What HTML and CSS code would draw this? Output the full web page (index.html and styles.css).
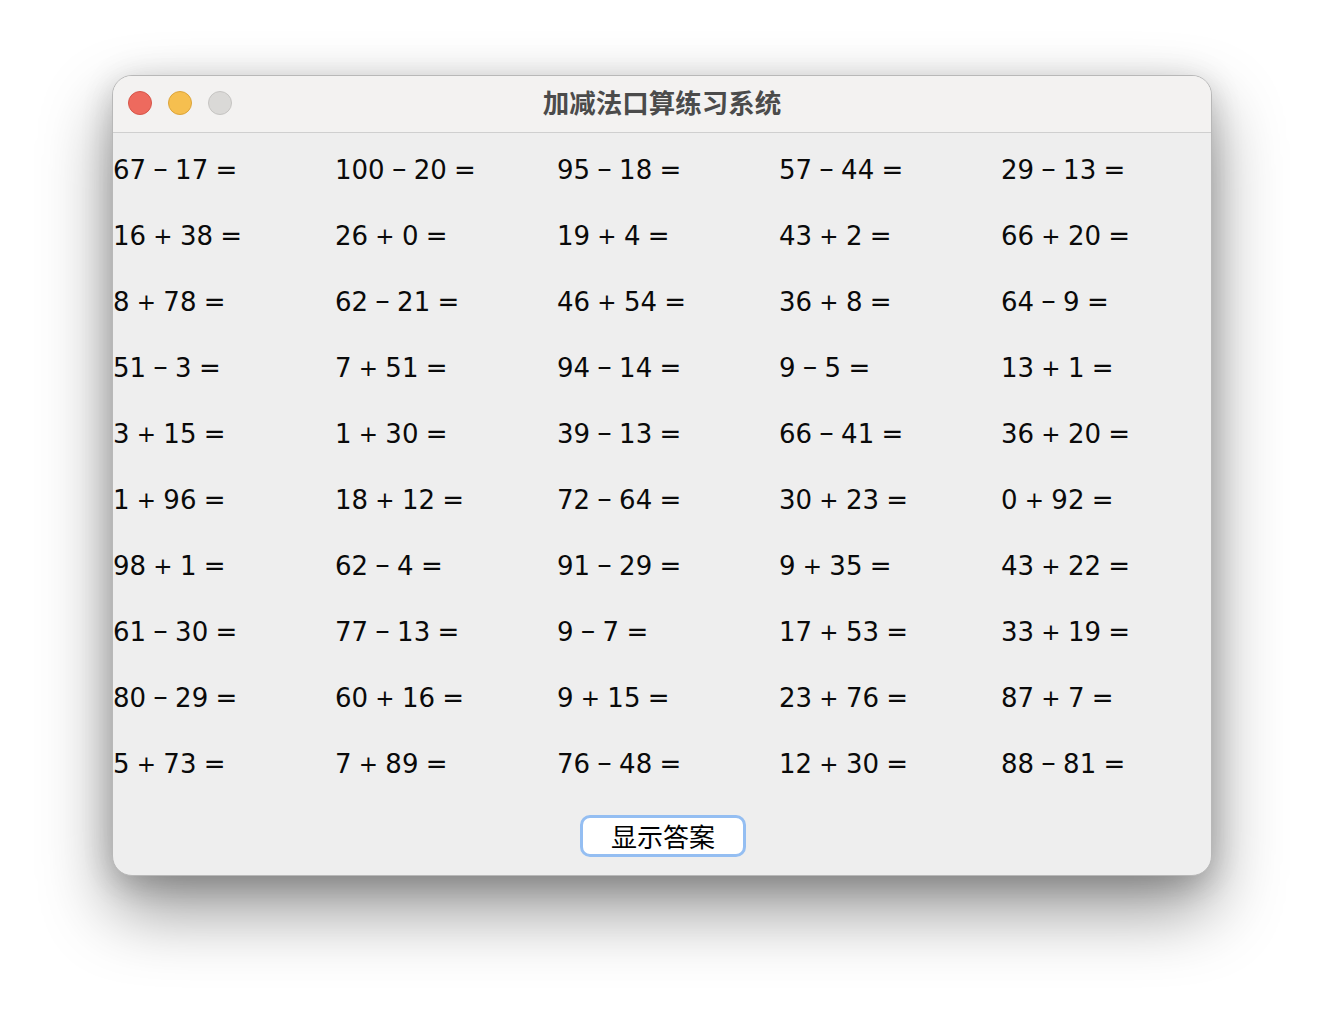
FILE: index.html
```html
<!DOCTYPE html>
<html lang="zh-CN">
<head>
<meta charset="utf-8">
<title>加减法口算练习系统</title>
<link rel="stylesheet" href="styles.css">
</head>
<body>
<div class="window">
  <div class="titlebar">
    <div class="lights">
      <span class="light red"></span>
      <span class="light yellow"></span>
      <span class="light grey"></span>
    </div>
    <div class="title">加减法口算练习系统</div>
  </div>
  <div class="content">
    <div class="grid">
      <div class="cell">67 <span class="mi">–</span> 17 =</div><div class="cell">100 <span class="mi">–</span> 20 =</div><div class="cell">95 <span class="mi">–</span> 18 =</div><div class="cell">57 <span class="mi">–</span> 44 =</div><div class="cell">29 <span class="mi">–</span> 13 =</div>
      <div class="cell">16 <span class="pl">+</span> 38 =</div><div class="cell">26 <span class="pl">+</span> 0 =</div><div class="cell">19 <span class="pl">+</span> 4 =</div><div class="cell">43 <span class="pl">+</span> 2 =</div><div class="cell">66 <span class="pl">+</span> 20 =</div>
      <div class="cell">8 <span class="pl">+</span> 78 =</div><div class="cell">62 <span class="mi">–</span> 21 =</div><div class="cell">46 <span class="pl">+</span> 54 =</div><div class="cell">36 <span class="pl">+</span> 8 =</div><div class="cell">64 <span class="mi">–</span> 9 =</div>
      <div class="cell">51 <span class="mi">–</span> 3 =</div><div class="cell">7 <span class="pl">+</span> 51 =</div><div class="cell">94 <span class="mi">–</span> 14 =</div><div class="cell">9 <span class="mi">–</span> 5 =</div><div class="cell">13 <span class="pl">+</span> 1 =</div>
      <div class="cell">3 <span class="pl">+</span> 15 =</div><div class="cell">1 <span class="pl">+</span> 30 =</div><div class="cell">39 <span class="mi">–</span> 13 =</div><div class="cell">66 <span class="mi">–</span> 41 =</div><div class="cell">36 <span class="pl">+</span> 20 =</div>
      <div class="cell">1 <span class="pl">+</span> 96 =</div><div class="cell">18 <span class="pl">+</span> 12 =</div><div class="cell">72 <span class="mi">–</span> 64 =</div><div class="cell">30 <span class="pl">+</span> 23 =</div><div class="cell">0 <span class="pl">+</span> 92 =</div>
      <div class="cell">98 <span class="pl">+</span> 1 =</div><div class="cell">62 <span class="mi">–</span> 4 =</div><div class="cell">91 <span class="mi">–</span> 29 =</div><div class="cell">9 <span class="pl">+</span> 35 =</div><div class="cell">43 <span class="pl">+</span> 22 =</div>
      <div class="cell">61 <span class="mi">–</span> 30 =</div><div class="cell">77 <span class="mi">–</span> 13 =</div><div class="cell">9 <span class="mi">–</span> 7 =</div><div class="cell">17 <span class="pl">+</span> 53 =</div><div class="cell">33 <span class="pl">+</span> 19 =</div>
      <div class="cell">80 <span class="mi">–</span> 29 =</div><div class="cell">60 <span class="pl">+</span> 16 =</div><div class="cell">9 <span class="pl">+</span> 15 =</div><div class="cell">23 <span class="pl">+</span> 76 =</div><div class="cell">87 <span class="pl">+</span> 7 =</div>
      <div class="cell">5 <span class="pl">+</span> 73 =</div><div class="cell">7 <span class="pl">+</span> 89 =</div><div class="cell">76 <span class="mi">–</span> 48 =</div><div class="cell">12 <span class="pl">+</span> 30 =</div><div class="cell">88 <span class="mi">–</span> 81 =</div>
    </div>
    <div class="actions">
      <button class="btn">显示答案</button>
    </div>
  </div>
</div>
</body>
</html>
```
FILE: styles.css
```css
html, body {
  margin: 0;
  padding: 0;
  background: #ffffff;
}
body {
  font-family: "DejaVu Sans", "Noto Sans CJK SC", sans-serif;
  height: 1024px;
  overflow: hidden;
}
.window {
  width: 1098px;
  margin: 75px auto 0;
  border: 1px solid #b8b8b8;
  border-radius: 20px;
  background: #eeeeee;
  box-shadow: 0 34px 70px rgba(0, 0, 0, 0.42), 0 10px 30px rgba(0, 0, 0, 0.14), 0 0 40px rgba(0, 0, 0, 0.06);
  overflow: hidden;
}
.titlebar {
  position: relative;
  height: 56px;
  background: #f3f2f1;
  border-bottom: 1px solid #cfcfcf;
  display: flex;
  align-items: center;
  justify-content: center;
}
.lights {
  position: absolute;
  left: 15px;
  top: 15px;
  display: flex;
  gap: 16px;
}
.light {
  width: 22px;
  height: 22px;
  border-radius: 50%;
  border: 1px solid transparent;
}
.red { background: #ee6a5e; border-color: #d65549; }
.yellow { background: #f6bf4f; border-color: #dca43a; }
.grey { background: #dad9d7; border-color: #c5c4c2; }
.title {
  font-family: "Noto Sans CJK SC", sans-serif;
  font-weight: 700;
  font-size: 26.5px;
  color: #4b4b4b;
  line-height: 52px;
  padding-bottom: 4px;
}
.content {
  padding-top: 4px;
  padding-bottom: 18px;
}
.grid {
  display: grid;
  grid-template-columns: repeat(4, 222px) 1fr;
  grid-auto-rows: 66px;
}
.cell {
  font-size: 26px;
  line-height: 66px;
  color: #0a0a0a;
  white-space: nowrap;
  word-spacing: -1px;
}
.pl {
  font-size: 23px;
  line-height: 0;
  position: relative;
  top: -1px;
}
.mi {
  font-size: 29px;
  line-height: 0;
  position: relative;
  top: -1px;
}
.actions {
  display: flex;
  justify-content: center;
  margin-top: 18px;
}
.btn {
  width: 166px;
  height: 42px;
  margin-left: 2px;
  box-sizing: border-box;
  background: #ffffff;
  border: 3px solid #94bef2;
  border-radius: 10px;
  font-family: "Noto Sans CJK SC", sans-serif;
  font-size: 26px;
  color: #000000;
  padding: 0 0 2px;
  display: flex;
  align-items: center;
  justify-content: center;
}
```
